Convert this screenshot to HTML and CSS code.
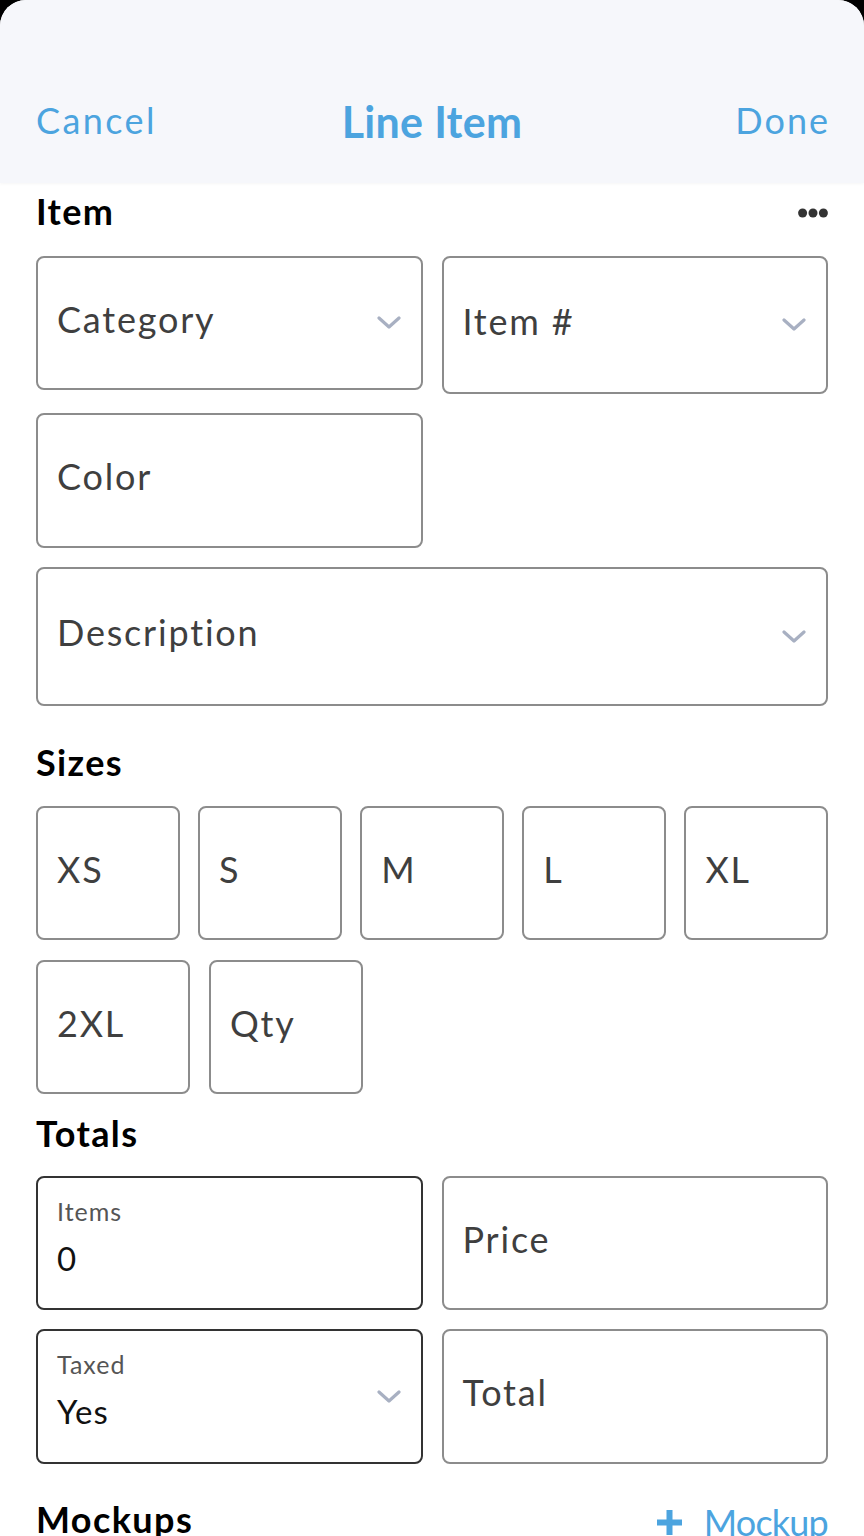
FILE: index.html
```html
<!DOCTYPE html>
<html>
<head>
<meta charset="utf-8">
<link rel="stylesheet" href="styles.css">
</head>
<body>
<div class="sheet">
  <header class="nav">
    <span class="nav-btn">Cancel</span>
    <span class="nav-title">Line Item</span>
    <span class="nav-btn nav-right">Done</span>
  </header>
  <main class="content">
    <div class="section-head head-item">
      <h2 class="heading">Item</h2>
      <svg class="dots" width="30" height="10" viewBox="0 0 30 10"><circle cx="4.6" cy="5" r="4.5"/><circle cx="15" cy="5" r="4.5"/><circle cx="25.4" cy="5" r="4.5"/></svg>
    </div>
    <div class="grid2 item-grid">
      <div class="field h134"><span class="ph">Category</span><svg class="chev" width="24" height="14" viewBox="0 0 24 14"><path d="M2 2 L12 11 L22 2"/></svg></div>
      <div class="field h138"><span class="ph">Item #</span><svg class="chev" width="24" height="14" viewBox="0 0 24 14"><path d="M2 2 L12 11 L22 2"/></svg></div>
      <div class="field h135"><span class="ph">Color</span></div>
      <div class="field h139 span2"><span class="ph">Description</span><svg class="chev" width="24" height="14" viewBox="0 0 24 14"><path d="M2 2 L12 11 L22 2"/></svg></div>
    </div>

    <h2 class="heading head-sizes">Sizes</h2>
    <div class="sizes-row1">
      <div class="field h134"><span class="ph">XS</span></div>
      <div class="field h134"><span class="ph">S</span></div>
      <div class="field h134"><span class="ph">M</span></div>
      <div class="field h134"><span class="ph">L</span></div>
      <div class="field h134"><span class="ph">XL</span></div>
    </div>
    <div class="sizes-row2">
      <div class="field h134 w154"><span class="ph">2XL</span></div>
      <div class="field h134 w154"><span class="ph">Qty</span></div>
    </div>

    <h2 class="heading head-totals">Totals</h2>
    <div class="grid2 totals-grid">
      <div class="field h134 dark stacked">
        <div class="stack"><span class="label">Items</span><span class="value">0</span></div>
      </div>
      <div class="field h134"><span class="ph">Price</span></div>
      <div class="field h135 dark stacked">
        <div class="stack"><span class="label">Taxed</span><span class="value">Yes</span></div>
        <svg class="chev" width="24" height="14" viewBox="0 0 24 14"><path d="M2 2 L12 11 L22 2"/></svg>
      </div>
      <div class="field h135"><span class="ph">Total</span></div>
    </div>

    <div class="section-head head-mockups">
      <h2 class="heading">Mockups</h2>
      <span class="add-link"><svg class="plus" width="27" height="27" viewBox="0 0 27 27"><path d="M13.5 1 V26 M1 13.5 H26"/></svg>Mockup</span>
    </div>
  </main>
</div>
</body>
</html>
```

FILE: styles.css
```css
* { box-sizing: border-box; }
html, body { margin: 0; padding: 0; }
body {
  background: #000;
  font-family: Lato, "Liberation Sans", sans-serif;
  width: 864px;
  height: 1536px;
  overflow: hidden;
}
.sheet {
  background: #fff;
  border-radius: 26px 26px 0 0;
  overflow: hidden;
  height: 1536px;
}
.nav {
  height: 183px;
  background: #f6f7fb;
  display: grid;
  grid-template-columns: 1fr auto 1fr;
  align-items: start;
  padding: 0 36px;
  box-shadow: 0 1px 3px rgba(0,0,0,0.04);
  position: relative;
}
.nav-btn {
  font-size: 36px;
  line-height: 1;
  color: #4ca4df;
  margin-top: 102px;
  letter-spacing: 2.4px;
  justify-self: start;
}
.nav-right {
  justify-self: end;
  letter-spacing: 2px;
  margin-right: -2px;
}
.nav-title {
  font-size: 43px;
  line-height: 1;
  font-weight: 700;
  color: #4ca4df;
  margin-top: 100px;
  letter-spacing: 0.3px;
}
.content {
  padding: 0 36px;
}
.heading {
  margin: 0;
  font-size: 36px;
  line-height: 1;
  font-weight: 700;
  color: #000;
  letter-spacing: 1.4px;
}
.section-head {
  display: flex;
  justify-content: space-between;
  align-items: center;
}
.head-item { margin-top: 10px; }
.dots { fill: #333; margin-top: 4px; }
.grid2 {
  display: grid;
  grid-template-columns: 1fr 1fr;
  column-gap: 19px;
  row-gap: 19px;
  align-items: start;
}
.item-grid { margin-top: 27px; }
.span2 { grid-column: 1 / 3; }
.field {
  border: 2px solid #8c8c8c;
  border-radius: 8px;
  display: flex;
  align-items: center;
  justify-content: space-between;
  padding: 0 20px 0 19px;
  background: #fff;
}
.field.dark { border-color: #333; }
.h134 { height: 134px; }
.h135 { height: 135px; }
.h138 { height: 138px; }
.h139 { height: 139px; }
.w154 { width: 154px; }
.ph {
  font-size: 36px;
  line-height: 1;
  color: #3f3f3f;
  letter-spacing: 1.8px;
  margin-top: -9px;
}
.chev {
  fill: none;
  stroke: #a8b0c2;
  stroke-width: 3.2;
  stroke-linecap: round;
  stroke-linejoin: round;
  flex: none;
}
.head-sizes { margin-top: 38px; }
.sizes-row1 {
  margin-top: 26px;
  display: grid;
  grid-template-columns: repeat(5, 1fr);
  column-gap: 18.5px;
}
.sizes-row2 {
  margin-top: 20px;
  display: flex;
  gap: 19px;
}
.head-totals { margin-top: 21px; }
.totals-grid { margin-top: 25px; }
.stacked { align-items: center; }
.stack {
  display: flex;
  flex-direction: column;
  gap: 18px;
  align-self: flex-start;
  padding-top: 21px;
}
.label {
  font-size: 25px;
  line-height: 1;
  color: #555;
  letter-spacing: 1px;
}
.value {
  font-size: 33px;
  line-height: 1;
  color: #111;
  letter-spacing: 1px;
}
.head-mockups { margin-top: 37px; align-items: flex-start; }
.add-link {
  display: flex;
  align-items: center;
  gap: 21px;
  font-size: 36px;
  line-height: 1;
  color: #4ca4df;
  letter-spacing: -0.8px;
  margin-top: 3px;
}
.plus {
  fill: none;
  stroke: #4ca4df;
  stroke-width: 6;
}
```
